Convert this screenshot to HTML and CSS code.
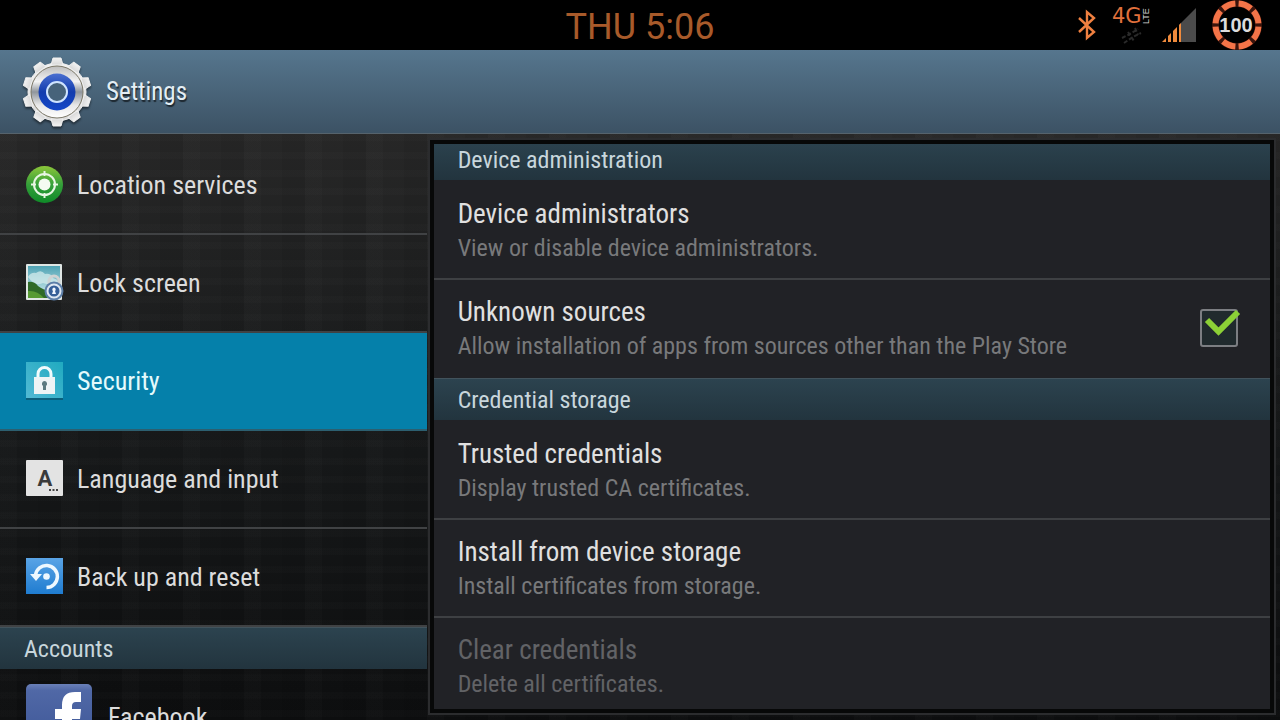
FILE: index.html
```
<!DOCTYPE html>
<html lang="en">
<head>
    <meta charset="UTF-8">
    <meta name="viewport" content="width=device-width, initial-scale=1.0">
    <title>Settings</title>
    <link rel="stylesheet" href="styles.css">
</head>
<body>
    <div class="status-bar">
        <span></span>
        <time class="clock">THU 5:06</time>
        <div class="status-icons">
            <!-- Bluetooth -->
            <svg class="bluetooth" width="20" height="32" viewBox="0 0 20 32" fill="none" stroke="#f08040" stroke-width="2.4">
                <path d="M2 9l15 14-7 6V3l7 6L2 23"/>
            </svg>
            <!-- Mobile network -->
            <svg class="network" width="40" height="44" viewBox="0 0 40 44">
                <text class="network-type" x="1" y="20">4G</text>
                <text class="network-lte" x="-21" y="38" transform="rotate(-90)">LTE</text>
                <g fill="none" stroke="#2a2a2a" stroke-width="2" stroke-dasharray="4 2">
                    <path d="M11 35l8-4 8-5M13 40l9-6 8-4M17 29l6 9M24 25l3 7"/>
                </g>
            </svg>
            <!-- Signal -->
            <svg class="signal" width="36" height="36" viewBox="0 0 36 36">
                <path d="M18 18L35 1v34H18z" fill="#4b4b4b"/>
                <path d="M1 35l4-4v4zM7 35v-6l3-3v9zM12 35V24l4-4v15zM18 35V18l2-2v19z" fill="#ef8a3c"/>
            </svg>
            <!-- Battery -->
            <svg class="battery" width="52" height="50" viewBox="0 0 52 50">
                <circle cx="26" cy="25" r="21.5" fill="none" stroke="#3a140c" stroke-width="7"/>
                <circle cx="26" cy="25" r="21.5" fill="none" stroke="#f47448" stroke-width="6" pathLength="80" stroke-dasharray="8 2" stroke-dashoffset="-1"/>
                <text class="battery-level" x="25" y="32" text-anchor="middle">100</text>
            </svg>
        </div>
    </div>

    <header class="title-bar">
        <svg class="gear" width="70" height="70" viewBox="0 0 70 70">
            <defs>
                <linearGradient id="gear-rim" x1="0" y1="0" x2="0" y2="1">
                    <stop offset="0" stop-color="#f2f2f2"/>
                    <stop offset="1" stop-color="#d8d8d8"/>
                </linearGradient>
                <linearGradient id="gear-ring" x1="0" y1="0" x2="0" y2="1">
                    <stop offset="0" stop-color="#bdbdbd"/>
                    <stop offset="0.3" stop-color="#f4f4f4"/>
                    <stop offset="0.5" stop-color="#8f959c"/>
                    <stop offset="0.75" stop-color="#e8e8e8"/>
                    <stop offset="1" stop-color="#ffffff"/>
                </linearGradient>
                <linearGradient id="gear-blue" x1="0" y1="0" x2="0" y2="1">
                    <stop offset="0" stop-color="#4a6fd0"/>
                    <stop offset="0.5" stop-color="#123cae"/>
                    <stop offset="1" stop-color="#1548c8"/>
                </linearGradient>
                <path id="tooth" d="M29 8l2-7h8l2 7z"/>
            </defs>
            <g fill="url(#gear-rim)" stroke="#f0f0f0" stroke-width="1" stroke-linejoin="round">
                <circle cx="35" cy="35" r="29"/>
                <use href="#tooth"/>
                <use href="#tooth" transform="rotate(36 35 35)"/>
                <use href="#tooth" transform="rotate(72 35 35)"/>
                <use href="#tooth" transform="rotate(108 35 35)"/>
                <use href="#tooth" transform="rotate(144 35 35)"/>
                <use href="#tooth" transform="rotate(180 35 35)"/>
                <use href="#tooth" transform="rotate(216 35 35)"/>
                <use href="#tooth" transform="rotate(252 35 35)"/>
                <use href="#tooth" transform="rotate(288 35 35)"/>
                <use href="#tooth" transform="rotate(324 35 35)"/>
            </g>
            <circle cx="35" cy="35" r="26" fill="url(#gear-ring)" stroke="#7c7868"/>
            <circle cx="35" cy="35" r="18.5" fill="url(#gear-blue)"/>
            <circle cx="35" cy="35" r="10" fill="#47637a" stroke="#cfe4ff" stroke-width="2"/>
        </svg>
        <h1>Settings</h1>
    </header>

    <main class="content">
        <nav class="sidebar">
            <a class="nav-item" href="#location">
                <svg width="38" height="38" viewBox="0 0 38 38">
                    <defs>
                        <linearGradient id="location-bg" x1="0" y1="0" x2="0" y2="1">
                            <stop offset="0" stop-color="#8cc63a"/>
                            <stop offset="0.5" stop-color="#35a03a"/>
                            <stop offset="1" stop-color="#0f8a28"/>
                        </linearGradient>
                    </defs>
                    <circle cx="18.5" cy="18.5" r="18.5" fill="url(#location-bg)"/>
                    <circle cx="18.5" cy="18.5" r="10.5" fill="none" stroke="#e8f6e4" stroke-width="2"/>
                    <circle cx="18.5" cy="18.5" r="6" fill="#f4fbf2"/>
                    <path d="M18.5 5v5M18.5 27v5M5 18.5h5M27 18.5h5" stroke="#e8f6e4" stroke-width="2"/>
                </svg>
                <span>Location services</span>
            </a>
            <a class="nav-item" href="#lock-screen">
                <svg width="38" height="38" viewBox="0 0 38 38">
                    <defs>
                        <linearGradient id="sky" x1="0" y1="0" x2="0" y2="1">
                            <stop offset="0" stop-color="#4fa3b4"/>
                            <stop offset="1" stop-color="#d5eef0"/>
                        </linearGradient>
                    </defs>
                    <rect x="0" y="0" width="36" height="36" rx="1" fill="#dfe6e4"/>
                    <rect x="2" y="2" width="32" height="32" fill="url(#sky)"/>
                    <path d="M2 13q3-5 8-4 5-4 9 1 6-1 8 4 4 1 6 4-8 4-16 1-8 4-15-6z" fill="#d9eeee" opacity="0.7"/>
                    <path d="M2 18q6-1 10 4 5 4 12 5l10 2v5H2z" fill="#2f6a28"/>
                    <path d="M2 27q9-1 16 7H2z" fill="#579a33"/>
                    <path d="M23 20v-3a5 5 0 0 1 10 0v3" fill="none" stroke="#cfd3d3" stroke-width="3"/>
                    <circle cx="28" cy="27" r="8.5" fill="#dfe8f2" stroke="#5d7fa8" stroke-width="2"/>
                    <circle cx="28" cy="27" r="5.5" fill="#365f98"/>
                    <path d="M28 23.500a2 2 0 0 1 1 3.500l1 3h-4l1-3a2 2 0 0 1 1-3.500z" fill="#f0f6ff"/>
                </svg>
                <span>Lock screen</span>
            </a>
            <a class="nav-item active" href="#security" aria-current="page">
                <svg width="38" height="38" viewBox="0 0 38 38">
                    <defs>
                        <linearGradient id="security-bg" x1="0" y1="1" x2="1" y2="0">
                            <stop offset="0" stop-color="#52b9d4"/>
                            <stop offset="1" stop-color="#20aac0"/>
                        </linearGradient>
                    </defs>
                    <rect y="1" width="37" height="37" fill="#0a5f7c"/>
                    <rect width="37" height="36" fill="url(#security-bg)"/>
                    <path d="M12 16v-4a6.500 6.500 0 0 1 13 0v4" fill="none" stroke="#f2fbfc" stroke-width="3"/>
                    <rect x="8" y="15" width="21" height="17" fill="#eef4f5"/>
                    <path d="M18.500 19a2.800 2.800 0 0 1 1.500 5v4h-3v-4a2.800 2.800 0 0 1 1.500-5z" fill="#5c7a80"/>
                </svg>
                <span>Security</span>
            </a>
            <a class="nav-item" href="#language">
                <svg width="38" height="38" viewBox="0 0 38 38">
                    <rect width="37" height="36" rx="1" fill="#e3e3e3"/>
                    <text class="key-letter" x="19" y="26" text-anchor="middle">A</text>
                    <path d="M23 30h2M26.500 30h2M30 30h2" stroke="#444" stroke-width="2"/>
                </svg>
                <span>Language and input</span>
            </a>
            <a class="nav-item" href="#backup">
                <svg width="38" height="38" viewBox="0 0 38 38">
                    <defs>
                        <linearGradient id="backup-bg" x1="0" y1="0" x2="0" y2="1">
                            <stop offset="0" stop-color="#5aa4e6"/>
                            <stop offset="1" stop-color="#1f7cd0"/>
                        </linearGradient>
                    </defs>
                    <rect width="37" height="36" fill="url(#backup-bg)"/>
                    <path d="M9.500 17a11 11 0 1 1 11 12.500" fill="none" stroke="#eef8ff" stroke-width="3.500"/>
                    <path d="M4 16h12l-6 7z" fill="#eef8ff"/>
                    <circle cx="20.500" cy="18.500" r="3.300" fill="#eef8ff"/>
                </svg>
                <span>Back up and reset</span>
            </a>
            <h2 class="section-title">Accounts</h2>
            <a class="nav-item account" href="#facebook">
                <svg width="66" height="66" viewBox="0 0 66 66">
                    <defs>
                        <linearGradient id="facebook-bg" x1="0" y1="0" x2="0" y2="1">
                            <stop offset="0" stop-color="#6a80b8"/>
                            <stop offset="0.1" stop-color="#5068a6"/>
                            <stop offset="1" stop-color="#3c5596"/>
                        </linearGradient>
                    </defs>
                    <rect width="66" height="66" rx="5" fill="url(#facebook-bg)"/>
                    <path d="M36 66V35h-7V25h7v-4q0-13 13-13h6v10h-5q-4 0-4 4v3h9l-1 10h-8v31z" fill="#fff"/>
                </svg>
                <span>Facebook</span>
            </a>
        </nav>

        <section class="panel">
            <div class="panel-scroll">
                <h2 class="section-title">Device administration</h2>
                <div class="setting">
                    <div class="setting-text">
                        <h3>Device administrators</h3>
                        <p>View or disable device administrators.</p>
                    </div>
                </div>
                <label class="setting" for="unknown-sources">
                    <span class="setting-text">
                        <strong>Unknown sources</strong>
                        <small>Allow installation of apps from sources other than the Play Store</small>
                    </span>
                    <span class="check">
                        <input type="checkbox" id="unknown-sources" checked>
                        <svg width="42" height="38" viewBox="0 0 42 38">
                            <path d="M7 11l11.500 11.500L38 3" fill="none" stroke="#8cd036" stroke-width="6"/>
                        </svg>
                    </span>
                </label>
                <h2 class="section-title">Credential storage</h2>
                <div class="setting">
                    <div class="setting-text">
                        <h3>Trusted credentials</h3>
                        <p>Display trusted CA certificates.</p>
                    </div>
                </div>
                <div class="setting">
                    <div class="setting-text">
                        <h3>Install from device storage</h3>
                        <p>Install certificates from storage.</p>
                    </div>
                </div>
                <div class="setting disabled">
                    <div class="setting-text">
                        <h3>Clear credentials</h3>
                        <p>Delete all certificates.</p>
                    </div>
                </div>
            </div>
        </section>
    </main>
</body>
</html>
```
FILE: styles.css
```
* {
    box-sizing: border-box;
}
body {
    font-family: 'Roboto Condensed', 'Liberation Sans Narrow', Roboto, sans-serif;
    background-color: #000;
    color: #dcdcdc;
    display: flex;
    flex-direction: column;
    height: 100vh;
    margin: 0;
    overflow: hidden;
}
h1, h2, h3, p {
    margin: 0;
    font-weight: normal;
}

/* Status bar */
.status-bar {
    display: grid;
    grid-template-columns: 1fr auto 1fr;
    align-items: center;
    height: 50px;
    flex-shrink: 0;
    background-color: #000;
}
.clock {
    font-family: Roboto, sans-serif;
    font-size: 36px;
    line-height: 46px;
    padding-top: 4px;
    color: #a85a2a;
}
.status-icons {
    display: flex;
    align-items: center;
    justify-content: flex-end;
    gap: 14px;
    padding-right: 17px;
}
.status-icons svg {
    display: block;
}
.status-icons .network {
    margin-right: -4px;
}
.network-type {
    font-family: 'DejaVu Sans', sans-serif;
    font-size: 21px;
    fill: #e0703c;
}
.network-lte {
    font-family: 'Liberation Sans', sans-serif;
    font-size: 9px;
    fill: #d0d0d0;
}
.battery-level {
    font-family: 'Liberation Sans', sans-serif;
    font-size: 20px;
    font-weight: 700;
    fill: #dcdcdc;
}

/* Title bar */
.title-bar {
    display: flex;
    align-items: center;
    gap: 14px;
    height: 84px;
    flex-shrink: 0;
    padding-left: 22px;
    background: linear-gradient(#56768e, #3c5264);
    border-bottom: 1px solid #56636c;
}
.gear {
    filter: drop-shadow(0 2px 1px rgba(0, 0, 0, 0.5));
}
.title-bar h1 {
    font-size: 25px;
    color: #e4eef4;
    text-shadow: 1px 2px 1px rgba(0, 0, 0, 0.6);
}

/* Two column layout */
.content {
    display: grid;
    grid-template-columns: 1fr 2fr;
    flex: 1;
    min-height: 0;
    background:
        repeating-linear-gradient(90deg, rgba(255, 255, 255, 0.01) 0 17px, transparent 17px 38px, rgba(0, 0, 0, 0.06) 38px 61px),
        repeating-linear-gradient(rgba(255, 255, 255, 0.01) 0 7px, transparent 7px 18px),
        linear-gradient(#272727, #17191a 50%, #0d0e0f);
}
.sidebar {
    overflow: hidden;
    padding-top: 3px;
}
.nav-item {
    display: flex;
    align-items: center;
    gap: 13px;
    height: 98px;
    padding-left: 26px;
    font-size: 26px;
    color: #dcdcdc;
    text-decoration: none;
    border-bottom: 2px solid #404244;
}
.nav-item.active {
    background-color: #0580aa;
    border-bottom-color: #2c5f70;
    color: #e4fafc;
}
.nav-item.account {
    gap: 16px;
}
.key-letter {
    font-family: Roboto, sans-serif;
    font-size: 22px;
    font-weight: 700;
    fill: #3a3a3a;
}
.section-title {
    height: 42px;
    padding-left: 24px;
    font-size: 24px;
    line-height: 42px;
    color: #c8d6dc;
    background: linear-gradient(#2c434f, #22343e);
    border-top: 1px solid #42535c;
}

/* Right panel */
.panel {
    margin: 4px 4px 5px 1px;
    padding: 4px;
    background-color: #070808;
    border: 2px solid #2b2c2e;
    min-height: 0;
}
.panel-scroll {
    height: 100%;
    overflow: hidden;
    background-color: #212226;
}
.panel-scroll > .section-title:first-child {
    margin-top: -6px;
}
.setting {
    display: flex;
    align-items: center;
    justify-content: space-between;
    height: 98px;
    padding: 2px 28px 0 24px;
    border-top: 2px solid transparent;
}
.setting + .setting {
    border-top-color: #3e4043;
}
.setting + .section-title {
    margin-top: 2px;
}
.setting-text h3,
.setting-text strong {
    display: block;
    font-size: 27px;
    font-weight: normal;
    line-height: 34px;
    color: #e0e0e0;
}
.setting-text p,
.setting-text small {
    display: block;
    font-size: 24px;
    line-height: 34px;
    color: #78797b;
}
.setting.disabled h3,
.setting.disabled p {
    color: #626366;
}

/* Checkbox with the tick drawn over its edge */
.check {
    position: relative;
    width: 42px;
    height: 40px;
}
.check input {
    appearance: none;
    display: block;
    width: 38px;
    height: 38px;
    margin: 0;
    background-color: #202a2d;
    border: 2px solid #7c7e82;
    border-radius: 3px;
}
.check svg {
    position: absolute;
    top: 0;
    left: 0;
    pointer-events: none;
}
.check input:not(:checked) + svg {
    display: none;
}
```
